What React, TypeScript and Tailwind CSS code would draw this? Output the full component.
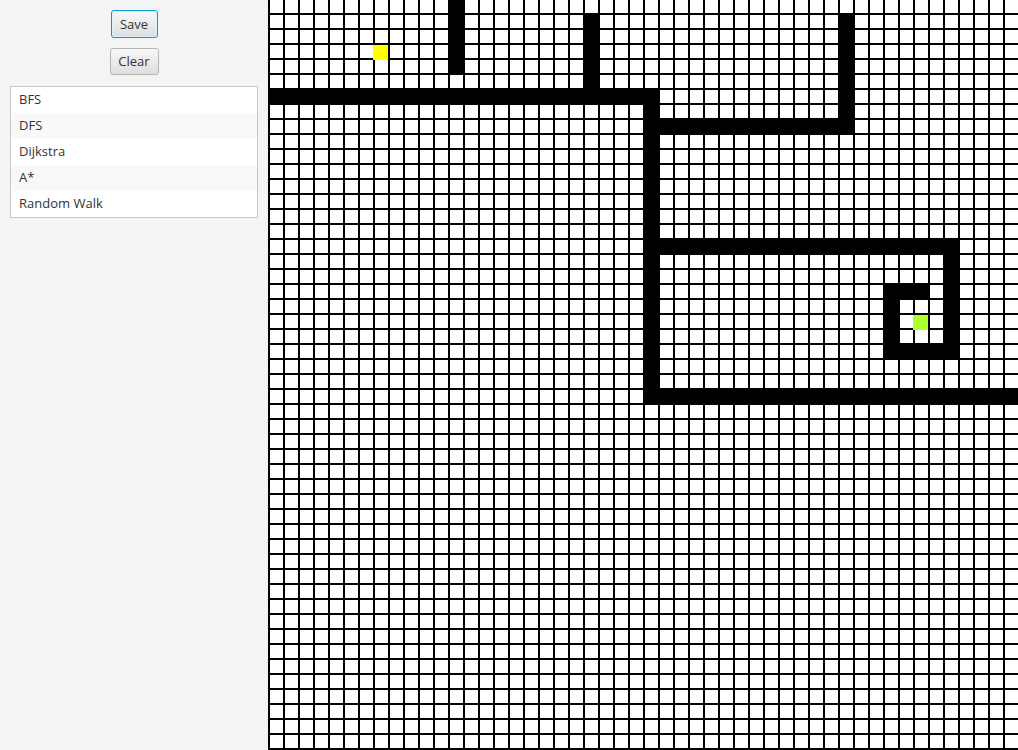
import React from 'react';

const COLS = 50;
const ROWS = 51;
const CELL = 15;

type Run = [number, number, number, number]; // c0, c1, r0, r1 inclusive

const WALLS: Run[] = [
  [12, 12, 0, 4],
  [21, 21, 1, 5],
  [0, 25, 6, 6],
  [25, 25, 6, 26],
  [25, 38, 8, 8],
  [38, 38, 1, 8],
  [25, 49, 26, 26],
  [25, 45, 16, 16],
  [45, 45, 16, 23],
  [41, 45, 23, 23],
  [41, 41, 19, 23],
  [41, 43, 19, 19],
];

const isWall = (c: number, r: number) =>
  WALLS.some(([c0, c1, r0, r1]) => c >= c0 && c <= c1 && r >= r0 && r <= r1);

const ALGORITHMS = ['BFS', 'DFS', 'Dijkstra', 'A*', 'Random Walk'];

const Grid: React.FC = () => {
  const cells: React.ReactNode[] = [];
  for (let r = 0; r < ROWS; r++) {
    for (let c = 0; c < COLS; c++) {
      if (isWall(c, r)) continue;
      cells.push(
        <rect key={`${c}-${r}`} x={c * CELL + 2} y={r * CELL} width={13} height={13} fill="#ffffff" />
      );
    }
  }
  return (
    <svg width={750} height={750} viewBox="0 0 750 750" className="block shrink-0" shapeRendering="crispEdges">
      <rect x={0} y={0} width={750} height={750} fill="#000000" />
      {cells}
      {/* start and goal */}
      <rect x={105} y={45} width={15} height={15} fill="#ffff00" />
      <rect x={645} y={315} width={15} height={15} fill="#adff2f" />
    </svg>
  );
};

export default function App() {
  return (
    <div
      className="flex w-[1018px] h-[750px] overflow-hidden bg-[#f4f4f4]"
      style={{ fontFamily: '"Open Sans", "Liberation Sans", sans-serif' }}
    >
      <div className="w-[268px] shrink-0 flex flex-col items-center pt-[10px]">
        <button className="h-[28px] w-[47px] rounded-[3px] border border-[#039ed3] bg-gradient-to-b from-[#f8f8f8] to-[#dedede] text-[13px] text-[#333333] shadow-[inset_0_0_0_1px_#dcf1fa] leading-none">
          Save
        </button>
        <button className="mt-[10px] h-[27px] w-[49px] rounded-[3px] border border-[#b5b5b5] bg-gradient-to-b from-[#f8f8f8] to-[#dedede] text-[13px] text-[#333333] leading-none">
          Clear
        </button>
        <div className="mt-[11px] w-[248px] border border-[#c8c8c8] bg-white">
          {ALGORITHMS.map((name, i) => (
            <div
              key={name}
              className={`h-[26px] flex items-center pl-[8px] text-[13px] text-[#333333] ${
                i % 2 === 1 ? 'bg-[#f9f9f9]' : 'bg-white'
              }`}
            >
              {name}
            </div>
          ))}
        </div>
      </div>
      <Grid />
    </div>
  );
}
